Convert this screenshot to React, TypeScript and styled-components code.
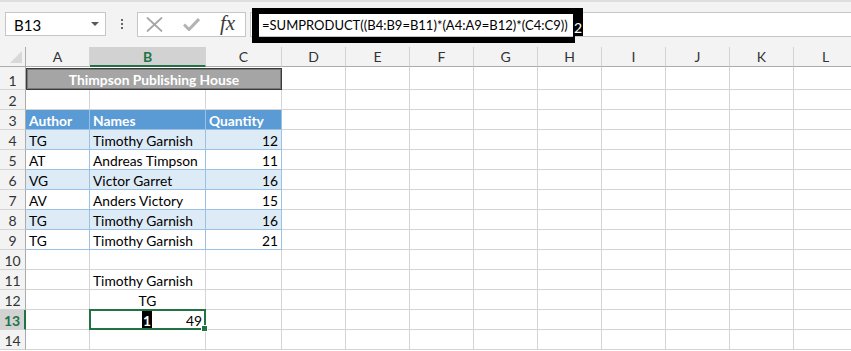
import React from "react";
import styled, { createGlobalStyle, css } from "styled-components";

const GREEN = "#217346";
const GRID = "#d4d4d4";
const TABLE_LINE = "#9bc2e6";

const GlobalStyle = createGlobalStyle`
  html, body {
    margin: 0;
    padding: 0;
    background: #ffffff;
  }
  body {
    font-family: Lato, "Open Sans", Arial, sans-serif;
    color: #000;
  }
`;

const Page = styled.div`
  width: 851px;
  height: 351px;
  overflow: hidden;
  background: #fff;
`;

const Toolbar = styled.div`
  height: 47px;
  box-sizing: border-box;
  background: #f3f3f3;
  border-top: 2px solid #dedede;
  display: flex;
  align-items: flex-start;
  padding-top: 10px;
`;

const NameBox = styled.div`
  margin-left: 5px;
  width: 101px;
  height: 24px;
  box-sizing: border-box;
  background: #fff;
  border: 1px solid #c6c6c6;
  display: flex;
  align-items: center;
  justify-content: space-between;
  padding: 2px 6px 0 8px;
  font-size: 15px;
`;

const DropArrow = styled.span`
  width: 0;
  height: 0;
  border-left: 4px solid transparent;
  border-right: 4px solid transparent;
  border-top: 4px solid #595959;
  margin-bottom: 2px;
`;

const Dots = styled.div`
  width: 31px;
  height: 24px;
  display: flex;
  flex-direction: column;
  align-items: center;
  justify-content: center;
  gap: 2px;
  & > span {
    width: 2px;
    height: 2px;
    background: #666;
  }
`;

const ActionBox = styled.div`
  width: 109px;
  height: 25px;
  box-sizing: border-box;
  background: #fff;
  border: 1px solid #c6c6c6;
  display: flex;
  align-items: center;
  padding-left: 8px;
  gap: 20px;
`;

const Fx = styled.span`
  font-family: "Liberation Serif", "DejaVu Serif", serif;
  font-style: italic;
  font-size: 21px;
  color: #3c3c3c;
  line-height: 1;
  position: relative;
  top: -1px;
`;

const FormulaBar = styled.div`
  position: relative;
  margin-left: 4px;
  flex: 1;
  height: 25px;
  box-sizing: border-box;
  background: #fff;
  border: 1px solid #c6c6c6;
  border-right: none;
  display: flex;
  align-items: center;
  padding: 1px 0 0 11px;
  font-size: 13px;
  white-space: nowrap;
`;

const FormulaFrame = styled.div`
  position: absolute;
  left: 1px;
  top: -5px;
  width: 323px;
  height: 35px;
  box-sizing: border-box;
  border-style: solid;
  border-color: #000;
  border-width: 6px 2px 6px 7px;
  pointer-events: none;
`;

const StepBadge = styled.div`
  position: absolute;
  left: 322px;
  top: -5px;
  width: 10px;
  height: 28px;
  background: #000;
  color: #fff;
  font-size: 14px;
  display: flex;
  align-items: flex-end;
  justify-content: center;
  line-height: 17px;
`;

const Sheet = styled.div`
  display: grid;
  grid-template-columns: 26px 64px 116px 76px repeat(9, 64px);
  grid-template-rows: 20px 23px repeat(13, 20px);
`;

const HeadCell = styled.div<{ $active?: boolean }>`
  box-sizing: border-box;
  background: #f3f3f3;
  border-right: 1px solid ${GRID};
  border-bottom: 1px solid #ababab;
  display: flex;
  align-items: center;
  justify-content: center;
  font-size: 14px;
  color: #333;
  ${(p) =>
    p.$active &&
    css`
      background: #d2d2d2;
      color: ${GREEN};
      font-weight: 700;
      border-bottom: 2px solid ${GREEN};
    `}
`;

const Corner = styled.div`
  box-sizing: border-box;
  background: #f3f3f3;
  border-right: 1px solid #ababab;
  border-bottom: 1px solid #ababab;
  display: flex;
  align-items: flex-end;
  justify-content: flex-end;
  padding: 0 3px 3px 0;
`;

const RowHead = styled.div<{ $active?: boolean }>`
  box-sizing: border-box;
  background: #f3f3f3;
  border-right: 1px solid #ababab;
  border-bottom: 1px solid ${GRID};
  display: flex;
  align-items: flex-end;
  justify-content: center;
  font-size: 14px;
  color: #333;
  line-height: 16px;
  ${(p) =>
    p.$active &&
    css`
      background: #d2d2d2;
      color: ${GREEN};
      font-weight: 700;
      border-right: 2px solid ${GREEN};
    `}
`;

type Fill = "none" | "head" | "band" | "title";

const fills: Record<Fill, string> = {
  none: "#fff",
  head: "#5b9bd5",
  band: "#ddebf7",
  title: "#a5a5a5",
};

const Cell = styled.div<{
  $fill?: Fill;
  $align?: "left" | "right" | "center";
  $span?: number;
  $table?: boolean;
}>`
  position: relative;
  box-sizing: border-box;
  background: ${(p) => fills[p.$fill || "none"]};
  border-right: 1px solid ${(p) => (p.$table ? TABLE_LINE : GRID)};
  border-bottom: 1px solid ${(p) => (p.$table ? TABLE_LINE : GRID)};
  grid-column: span ${(p) => p.$span || 1};
  display: flex;
  align-items: flex-end;
  justify-content: ${(p) =>
    p.$align === "right" ? "flex-end" : p.$align === "center" ? "center" : "flex-start"};
  padding: 0 3px 0 3px;
  font-size: 13.8px;
  line-height: 16px;
  white-space: nowrap;
  ${(p) =>
    p.$fill === "head" &&
    css`
      color: #fff;
      font-weight: 700;
    `}
  ${(p) =>
    p.$fill === "title" &&
    css`
      color: #fff;
      font-weight: 700;
      border: 1px solid #3a3a3a;
      box-shadow: inset 0 0 0 1px #7a7a7a;
      margin-top: 1px;
      padding-bottom: 1px;
    `}
`;

const SelectedCell = styled(Cell)`
  &::after {
    content: "";
    position: absolute;
    left: -1px;
    top: -1px;
    right: -1px;
    bottom: -1px;
    border: 2px solid ${GREEN};
    pointer-events: none;
  }
  &::before {
    content: "";
    position: absolute;
    right: -3px;
    bottom: -3px;
    width: 5px;
    height: 5px;
    background: ${GREEN};
    border: 1px solid #fff;
    z-index: 1;
  }
`;

const StepMark = styled.span`
  background: #000;
  color: #fff;
  font-weight: 700;
  padding: 1px 1px 0;
  margin-left: 49px;
  margin-right: auto;
  line-height: 17px;
`;

const COLS = ["A", "B", "C", "D", "E", "F", "G", "H", "I", "J", "K", "L"];

type Row = { a?: string; b?: string; c?: string; band?: boolean };

const tableRows: Row[] = [
  { a: "TG", b: "Timothy Garnish", c: "12", band: true },
  { a: "AT", b: "Andreas Timpson", c: "11" },
  { a: "VG", b: "Victor Garret", c: "16", band: true },
  { a: "AV", b: "Anders Victory", c: "15" },
  { a: "TG", b: "Timothy Garnish", c: "16", band: true },
  { a: "TG", b: "Timothy Garnish", c: "21" },
];

const Empties = ({ n }: { n: number }) => (
  <>
    {Array.from({ length: n }).map((_, i) => (
      <Cell key={i} />
    ))}
  </>
);

export default function App() {
  return (
    <Page>
      <GlobalStyle />
      <Toolbar>
        <NameBox>
          <span>B13</span>
          <DropArrow />
        </NameBox>
        <Dots>
          <span />
          <span />
          <span />
        </Dots>
        <ActionBox>
          <svg width="17" height="15" viewBox="0 0 17 15">
            <path d="M1 0.5 L16 14.5 M16 0.5 L1 14.5" stroke="#a6a6a6" strokeWidth="1.8" fill="none" />
          </svg>
          <svg width="17" height="13" viewBox="0 0 17 13">
            <path d="M1 6.5 L6 11.5 L16 1" stroke="#b3b3b3" strokeWidth="3" fill="none" />
          </svg>
          <Fx>fx</Fx>
        </ActionBox>
        <FormulaBar>
          =SUMPRODUCT((B4:B9=B11)*(A4:A9=B12)*(C4:C9))
          <FormulaFrame />
          <StepBadge>2</StepBadge>
        </FormulaBar>
      </Toolbar>

      <Sheet>
        <Corner>
          <svg width="12" height="12" viewBox="0 0 12 12">
            <polygon points="12,0 12,12 0,12" fill="#d8d8d8" />
          </svg>
        </Corner>
        {COLS.map((c) => (
          <HeadCell key={c} $active={c === "B"}>
            {c}
          </HeadCell>
        ))}

        <RowHead>1</RowHead>
        <Cell $fill="title" $span={3} $align="center">
          Thimpson Publishing House
        </Cell>
        <Empties n={9} />

        <RowHead>2</RowHead>
        <Empties n={12} />

        <RowHead>3</RowHead>
        <Cell $fill="head" $table>Author</Cell>
        <Cell $fill="head" $table>Names</Cell>
        <Cell $fill="head" $table>Quantity</Cell>
        <Empties n={9} />

        {tableRows.map((r, i) => (
          <React.Fragment key={i}>
            <RowHead>{i + 4}</RowHead>
            <Cell $table $fill={r.band ? "band" : "none"}>{r.a}</Cell>
            <Cell $table $fill={r.band ? "band" : "none"}>{r.b}</Cell>
            <Cell $table $fill={r.band ? "band" : "none"} $align="right">
              {r.c}
            </Cell>
            <Empties n={9} />
          </React.Fragment>
        ))}

        <RowHead>10</RowHead>
        <Empties n={12} />

        <RowHead>11</RowHead>
        <Cell />
        <Cell>Timothy Garnish</Cell>
        <Empties n={10} />

        <RowHead>12</RowHead>
        <Cell />
        <Cell $align="center">TG</Cell>
        <Empties n={10} />

        <RowHead $active>13</RowHead>
        <Cell />
        <SelectedCell $align="right">
          <StepMark>1</StepMark>
          49
        </SelectedCell>
        <Empties n={10} />

        <RowHead>14</RowHead>
        <Empties n={12} />
      </Sheet>
    </Page>
  );
}
